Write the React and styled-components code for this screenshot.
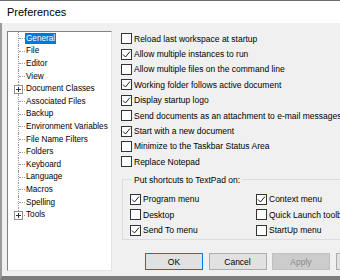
import React from 'react'
import styled, { createGlobalStyle } from 'styled-components'

const GlobalStyle = createGlobalStyle`
    body {
        margin: 0;
        background: #f0f0f0;
    }
`

const Window = styled.div`
    width: 340px;
    height: 280px;
    overflow: hidden;
    display: flex;
    flex-direction: column;
    font-family: "Liberation Sans", Arial, sans-serif;
    color: #000;
    background: #f0f0f0;
`

const TitleBar = styled.div`
    flex: none;
    height: 22px;
    border-top: 1px solid #6e6e6e;
    background: #fff;
    display: flex;
    align-items: center;
    padding-left: 7px;
    font-size: 11px;
`

const Body = styled.div`
    flex: 1;
    min-height: 0;
    display: flex;
    gap: 9px;
    padding: 8px 0 5px 5px;
    border-left: 2px solid #9a9a9a;
    border-bottom: 4px solid #7c7c7c;
`

const Tree = styled.div`
    flex: none;
    width: 103px;
    background: #fff;
    border-top: 1px solid #828282;
    border-left: 1px solid #828282;
    border-right: 1px solid #e3e3e3;
    border-bottom: 1px solid #e3e3e3;
    font-size: 8.2px;
`

const TreeRow = styled.div`
    display: flex;
    align-items: center;
    height: 12.6px;
`

const Branch = styled.span`
    position: relative;
    flex: none;
    width: 17px;
    height: 100%;

    &::before {
        content: '';
        position: absolute;
        left: 10px;
        top: 0;
        height: ${({ last }) => last ? '50%' : '100%'};
        border-left: 1px dotted #9a9a9a;
    }

    &::after {
        content: '';
        position: absolute;
        left: 11px;
        top: 50%;
        width: 6px;
        border-top: 1px dotted #9a9a9a;
    }
`

const Expander = styled.span`
    position: absolute;
    z-index: 1;
    left: 6px;
    top: 50%;
    margin-top: -4px;
    width: 7px;
    height: 7px;
    border: 1px solid #919191;
    background: #fff;
    display: flex;
    align-items: center;
    justify-content: center;
`

const TreeLabel = styled.span(({ selected }) => `
    padding: 0 1px;
    line-height: 11px;
    white-space: nowrap;
    background: ${ selected ? '#0078d7' : 'transparent' };
    color: ${ selected ? '#fff' : '#000' };
`)

const Panel = styled.div`
    flex: none;
    width: 262px;
    display: flex;
    flex-direction: column;
    font-size: 8.5px;
`

const CheckRow = styled.label`
    display: flex;
    align-items: center;
    gap: 2px;
    height: ${({ tall }) => tall || '15.4px'};
    white-space: nowrap;
`

const Box = styled.span`
    flex: none;
    width: 9px;
    height: 9px;
    border: 1px solid #333;
    background: #fff;
    display: flex;
`

const Group = styled.fieldset`
    margin: 5px 0 0 1px;
    padding: 7px 0 1px 7px;
    border: 1px solid #dcdcdc;
    display: grid;
    grid-template-columns: 126px 126px;
`

const Legend = styled.legend`
    margin-left: 2px;
    padding: 0 2px;
    line-height: 10px;
`

const Buttons = styled.div`
    display: flex;
    gap: 5.5px;
    margin: 13px 0 0 24px;
`

const Button = styled.button(({ primary, disabled }) => `
    flex: none;
    width: 58px;
    height: 17px;
    padding: 0;
    font-family: inherit;
    font-size: 8.5px;
    background: ${ disabled ? '#cccccc' : '#e1e1e1' };
    color: ${ disabled ? '#8a8a8a' : '#000' };
    border: 1px solid ${ primary ? '#0078d7' : disabled ? '#bfbfbf' : '#adadad' };
`)

const treeItems = [
    { name: 'General', selected: true },
    { name: 'File' },
    { name: 'Editor' },
    { name: 'View' },
    { name: 'Document Classes', expand: true },
    { name: 'Associated Files' },
    { name: 'Backup' },
    { name: 'Environment Variables' },
    { name: 'File Name Filters' },
    { name: 'Folders' },
    { name: 'Keyboard' },
    { name: 'Language' },
    { name: 'Macros' },
    { name: 'Spelling' },
    { name: 'Tools', expand: true },
]

const options = [
    ['Reload last workspace at startup', false],
    ['Allow multiple instances to run', true],
    ['Allow multiple files on the command line', false],
    ['Working folder follows active document', true],
    ['Display startup logo', true],
    ['Send documents as an attachment to e-mail messages', false],
    ['Start with a new document', true],
    ['Minimize to the Taskbar Status Area', false],
    ['Replace Notepad', false],
]

const shortcuts = [
    ['Program menu', true],
    ['Context menu', true],
    ['Desktop', false],
    ['Quick Launch toolbar', false],
    ['Send To menu', true],
    ['StartUp menu', false],
]

function Plus () {
    return (
        <svg width="5" height="5" viewBox="0 0 5 5">
            <path d="M0 2.5H5M2.5 0V5" stroke="#333" strokeWidth="1" />
        </svg>
    )
}

function Check ({ label, checked, tall }) {
    return (
        <CheckRow tall={tall}>
            <Box>
                { checked && (
                    <svg width="9" height="9" viewBox="0 0 9 9">
                        <path d="M1 4.5L3.5 7L8 1.5" fill="none" stroke="#222" strokeWidth="1" />
                    </svg>
                )}
            </Box>
            { label }
        </CheckRow>
    )
}

export default function App () {
    return (
        <Window>
            <GlobalStyle />
            <TitleBar>Preferences</TitleBar>
            <Body>
                <Tree>
                    { treeItems.map((item, i) => (
                        <TreeRow key={item.name}>
                            <Branch last={i === treeItems.length - 1}>
                                { item.expand && <Expander><Plus /></Expander> }
                            </Branch>
                            <TreeLabel selected={item.selected}>{ item.name }</TreeLabel>
                        </TreeRow>
                    ))}
                </Tree>
                <Panel>
                    { options.map(([label, checked]) => (
                        <Check key={label} label={label} checked={checked} />
                    ))}
                    <Group>
                        <Legend>Put shortcuts to TextPad on:</Legend>
                        { shortcuts.map(([label, checked]) => (
                            <Check key={label} label={label} checked={checked} tall="15.5px" />
                        ))}
                    </Group>
                    <Buttons>
                        <Button primary>OK</Button>
                        <Button>Cancel</Button>
                        <Button disabled>Apply</Button>
                        <Button>Help</Button>
                    </Buttons>
                </Panel>
            </Body>
        </Window>
    )
}
